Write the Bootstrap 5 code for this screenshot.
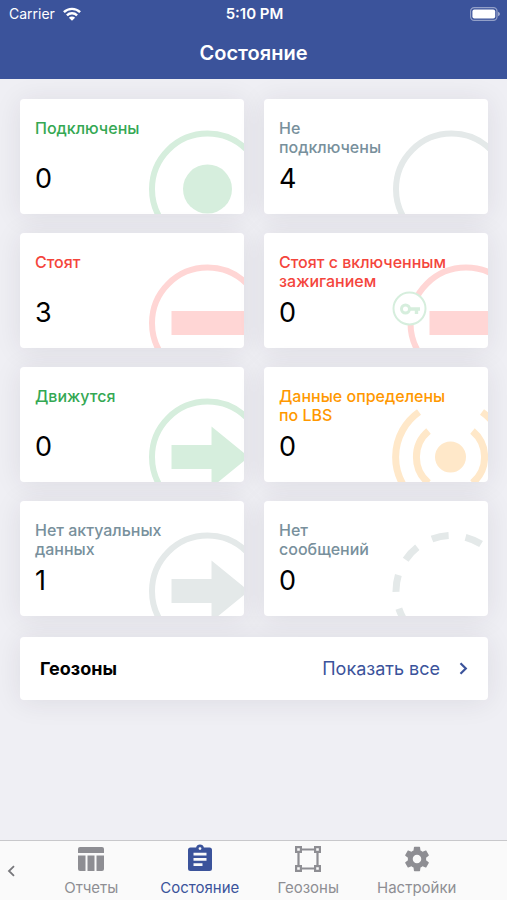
<!DOCTYPE html>
<html lang="ru">
<head>
<meta charset="utf-8">
<meta name="viewport" content="width=device-width, initial-scale=1">
<title>Состояние</title>
<link href="https://cdn.jsdelivr.net/npm/bootstrap@5.3.0/dist/css/bootstrap.min.css" rel="stylesheet">
<style>
  :root { --brand: #3b539b; --ok: #34a853; --muted: #78909c; --stop: #f4453c; --warn: #ff9800; }
  body { font-family: Inter, "Liberation Sans", sans-serif; background: #efeff4; color: #000; }
  .app-head { background: var(--brand); color: #fff; }
  .status-row { display: grid; grid-template-columns: 1fr auto 1fr; height: 28px; padding: 0 7px 0 9px; font-size: 14px; line-height: 20px; }
  .status-row strong { font-size: 15px; }
  .screen-title { font-size: 20px; line-height: 24px; padding: 13px 0 14px; }
  .app-main { padding: 20px 19px 20px 20px; }
  .tiles { display: grid; grid-template-columns: 1fr 1fr; gap: 19px 20px; }
  .tile, .zones { border: 0; border-radius: 4px; box-shadow: 0 2px 28px rgba(40, 30, 50, .09); }
  .tile { height: 115px; padding: 20px 15px 12px; overflow: hidden; text-decoration: none; color: #000; }
  .tile-label { height: 38px; margin-bottom: 6px; font-size: 16px; line-height: 19px; font-weight: 500; z-index: 1; }
  .tile-value { font-size: 27px; line-height: 32px; z-index: 1; }
  .tile-art { right: 0; bottom: 0; width: 96px; height: 85px; fill: none; stroke-width: 6; }
  .ok { color: var(--ok); } .muted-tone { color: var(--muted); } .stop { color: var(--stop); } .warn { color: var(--warn); }
  .art-ok { color: #d6eedd; } .art-muted { color: #e4e9e9; } .art-stop { color: #ffd6d5; } .art-warn { color: #ffe8c9; }
  .zones { margin-top: 21px; height: 63px; padding: 0 20px; font-size: 18px; }
  .zones a { color: var(--brand); text-decoration: none; gap: 19px; }
  .tab-strip { background: #fafafa; border-top: 1px solid #c8c8cb; height: 60px; padding-right: 36px; }
  .tab-strip a { color: #8e8e93; text-decoration: none; font-size: 15px; line-height: 18px; gap: 5px; padding-top: 3px; }
  .tab-strip a.current { color: var(--brand); }
  .tab-back { width: 37px; padding: 0 0 0 7px; border: 0; background: none; color: #77777b; }
</style>
<script src="https://cdn.jsdelivr.net/npm/bootstrap@5.3.0/dist/js/bootstrap.bundle.min.js"></script>
</head>
<body class="d-flex flex-column min-vh-100">

<header class="app-head">
  <div class="status-row align-items-center">
    <div class="d-flex align-items-center gap-2">
      <span>Carrier</span>
      <svg width="18" height="14" viewBox="0 0 18 14" fill="none" stroke="#fff" stroke-width="2.4" aria-hidden="true">
        <path d="M.9 5.2a11.6 11.6 0 0 1 16.2 0M3.9 8.4a7.3 7.3 0 0 1 10.2 0"/>
        <path d="M9 13.8 5.9 10.700a4.400 4.400 0 0 1 6.200 0z" fill="#fff" stroke="none"/>
      </svg>
    </div>
    <strong class="fw-semibold">5:10 PM</strong>
    <svg class="ms-auto" width="30" height="14" viewBox="0 0 30 14" aria-hidden="true">
      <rect x=".6" y=".6" width="26.400" height="12.800" rx="3.600" fill="none" stroke="#fff" stroke-opacity=".45" stroke-width="1.200"/>
      <rect x="2.400" y="2.400" width="22.800" height="9.200" rx="2" fill="#fff"/>
      <path d="M28 4.800q2 .7 2 2.200t-2 2.200z" fill="#fff" fill-opacity=".5"/>
    </svg>
  </div>
  <h1 class="screen-title fw-semibold text-center m-0">Состояние</h1>
</header>

<main class="app-main">
  <div class="tiles">
    <a href="#" class="card tile">
      <span class="tile-label flex-shrink-0 position-relative ok">Подключены</span>
      <span class="tile-value position-relative">0</span>
      <svg class="tile-art position-absolute art-ok" viewBox="0 0 96 85" stroke="currentColor" aria-hidden="true">
        <circle cx="59.500" cy="60" r="55.500"/><circle cx="59.500" cy="60" r="24.500" fill="currentColor" stroke="none"/>
      </svg>
    </a>
    <a href="#" class="card tile">
      <span class="tile-label flex-shrink-0 position-relative muted-tone">Не<br>подключены</span>
      <span class="tile-value position-relative">4</span>
      <svg class="tile-art position-absolute art-muted" viewBox="0 0 96 85" stroke="currentColor" aria-hidden="true">
        <circle cx="59.500" cy="60" r="55.500"/>
      </svg>
    </a>
    <a href="#" class="card tile">
      <span class="tile-label flex-shrink-0 position-relative stop">Стоят</span>
      <span class="tile-value position-relative">3</span>
      <svg class="tile-art position-absolute art-stop" viewBox="0 0 96 85" stroke="currentColor" aria-hidden="true">
        <circle cx="59.500" cy="60" r="55.500"/><path d="M23.500 48H96v24H23.500z" fill="currentColor" stroke="none"/>
      </svg>
    </a>
    <a href="#" class="card tile">
      <span class="tile-label flex-shrink-0 position-relative stop">Стоят с включенным<br>зажиганием</span>
      <span class="tile-value position-relative">0</span>
      <svg class="tile-art position-absolute art-stop" viewBox="0 0 96 85" stroke="currentColor" aria-hidden="true">
        <circle cx="74" cy="60" r="55.500"/><path d="M37.500 48H96v24H37.500z" fill="currentColor" stroke="none"/>
        <g stroke="#d6eedd">
          <circle cx="17.500" cy="45.500" r="16" fill="#fff" stroke-width="2"/>
          <circle cx="13.500" cy="46" r="4" stroke-width="3"/>
          <path d="M17.500 46H28M24.500 46v5" stroke-width="3.400"/>
        </g>
      </svg>
    </a>
    <a href="#" class="card tile">
      <span class="tile-label flex-shrink-0 position-relative ok">Движутся</span>
      <span class="tile-value position-relative">0</span>
      <svg class="tile-art position-absolute art-ok" viewBox="0 0 96 85" stroke="currentColor" aria-hidden="true">
        <circle cx="59.500" cy="60" r="55.500"/><path d="M23.500 48H63.500V29.500L101 60 63.500 90.500V72H23.500z" fill="currentColor" stroke="none"/>
      </svg>
    </a>
    <a href="#" class="card tile">
      <span class="tile-label flex-shrink-0 position-relative warn">Данные определены<br>по LBS</span>
      <span class="tile-value position-relative">0</span>
      <svg class="tile-art position-absolute art-warn" viewBox="0 0 96 85" stroke="currentColor" aria-hidden="true">
        <circle cx="58.500" cy="60" r="15.500" fill="currentColor" stroke="none"/>
        <path stroke-width="7" d="M36.500 34A34 34 0 0 0 36.500 86M80.500 34A34 34 0 0 1 80.500 86M27 15A55 55 0 0 0 27 105M90 15A55 55 0 0 1 90 105"/>
      </svg>
    </a>
    <a href="#" class="card tile">
      <span class="tile-label flex-shrink-0 position-relative muted-tone">Нет актуальных<br>данных</span>
      <span class="tile-value position-relative">1</span>
      <svg class="tile-art position-absolute art-muted" viewBox="0 0 96 85" stroke="currentColor" aria-hidden="true">
        <circle cx="59.500" cy="60" r="55.500"/><path d="M23.500 48H63.500V29.500L101 60 63.500 90.500V72H23.500z" fill="currentColor" stroke="none"/>
      </svg>
    </a>
    <a href="#" class="card tile">
      <span class="tile-label flex-shrink-0 position-relative muted-tone">Нет<br>сообщений</span>
      <span class="tile-value position-relative">0</span>
      <svg class="tile-art position-absolute art-muted" viewBox="0 0 96 85" stroke="currentColor" aria-hidden="true">
        <circle cx="59.500" cy="60" r="55.500" stroke-width="7" stroke-dasharray="17 17" transform="rotate(-216 59.500 60)"/>
      </svg>
    </a>
  </div>

  <section class="card zones flex-row align-items-center justify-content-between">
    <strong class="fw-bold">Геозоны</strong>
    <a href="#" class="d-flex align-items-center">Показать все
      <svg width="9" height="13" viewBox="0 0 9 13" fill="none" stroke="currentColor" stroke-width="2.200" aria-hidden="true"><path d="m1.500 1.200 5.300 5.300-5.300 5.300"/></svg>
    </a>
  </section>
</main>

<nav class="tab-strip d-flex mt-auto">
  <button class="tab-back d-flex align-items-center" type="button" aria-label="Назад">
    <svg width="8" height="12" viewBox="0 0 8 12" fill="none" stroke="currentColor" stroke-width="1.800" aria-hidden="true"><path d="M7 1.200 2 6l5 4.800"/></svg>
  </button>
  <div class="d-flex flex-fill">
    <a href="#" class="d-flex flex-column align-items-center w-25">
      <svg width="30" height="30" viewBox="0 0 30 30" fill="currentColor" aria-hidden="true">
        <path d="M4 3h22q2 0 2 2v4H2V5q0-2 2-2zM2 11.500h7.500V27H4q-2 0-2-2zM11.500 11.500h7V27h-7zM20.500 11.500H28V25q0 2-2 2h-5.500z"/>
      </svg>
      <span>Отчеты</span>
    </a>
    <a href="#" class="current d-flex flex-column align-items-center w-25" aria-current="page">
      <svg width="30" height="30" viewBox="0 0 30 30" aria-hidden="true">
        <path fill="currentColor" fill-rule="evenodd" d="M5.500 3.500h5.600a4 4 0 0 1 7.800 0h5.600a2.500 2.500 0 0 1 2.500 2.500v18.500a2.500 2.500 0 0 1-2.500 2.500h-19A2.500 2.500 0 0 1 3 24.500V6a2.500 2.500 0 0 1 2.500-2.500zM15 3.200a1.400 1.400 0 1 0 0 2.800 1.400 1.400 0 0 0 0-2.800zM8.500 8.800v2.700h13V8.800zM8.500 14v2.700h13V14zM8.500 19.200v2.700h9v-2.700z"/>
      </svg>
      <span>Состояние</span>
    </a>
    <a href="#" class="d-flex flex-column align-items-center w-25">
      <svg width="30" height="30" viewBox="0 0 30 30" fill="none" stroke="currentColor" stroke-width="2.200" aria-hidden="true">
        <path d="M3.100 3.100h4.800v4.800H3.100zM22.100 3.100h4.800v4.800h-4.800zM3.100 22.100h4.800v4.800H3.100zM22.100 22.100h4.800v4.800h-4.800zM8 5.500h14M8 24.500h14M5.500 8v14M24.500 8v14"/>
      </svg>
      <span>Геозоны</span>
    </a>
    <a href="#" class="d-flex flex-column align-items-center w-25">
      <svg width="30" height="30" viewBox="-.3 -.3 24.600 24.600" fill="currentColor" aria-hidden="true">
        <path d="M19.430 12.980c.04-.32.07-.64.07-.98s-.03-.66-.07-.98l2.110-1.650c.19-.15.24-.42.12-.64l-2-3.460c-.12-.22-.39-.3-.61-.22l-2.490 1c-.52-.4-1.080-.73-1.690-.98l-.38-2.650C14.460 2.180 14.250 2 14 2h-4c-.25 0-.46.18-.49.42l-.38 2.650c-.61.25-1.170.59-1.690.98l-2.490-1c-.23-.09-.49 0-.61.22l-2 3.460c-.13.22-.07.49.12.64l2.110 1.650c-.04.32-.07.65-.07.98s.03.66.07.98l-2.110 1.650c-.19.15-.24.42-.12.64l2 3.460c.12.22.39.3.61.22l2.490-1c.52.4 1.080.73 1.690.98l.38 2.650c.03.24.24.42.49.42h4c.25 0 .46-.18.49-.42l.38-2.650c.61-.25 1.170-.59 1.690-.98l2.490 1c.23.09.49 0 .61-.22l2-3.460c.12-.22.07-.49-.12-.64l-2.110-1.650zM12 15.500c-1.930 0-3.500-1.570-3.500-3.500s1.570-3.500 3.500-3.500 3.500 1.570 3.500 3.500-1.570 3.500-3.500 3.500z"/>
      </svg>
      <span>Настройки</span>
    </a>
  </div>
</nav>
</body>
</html>
